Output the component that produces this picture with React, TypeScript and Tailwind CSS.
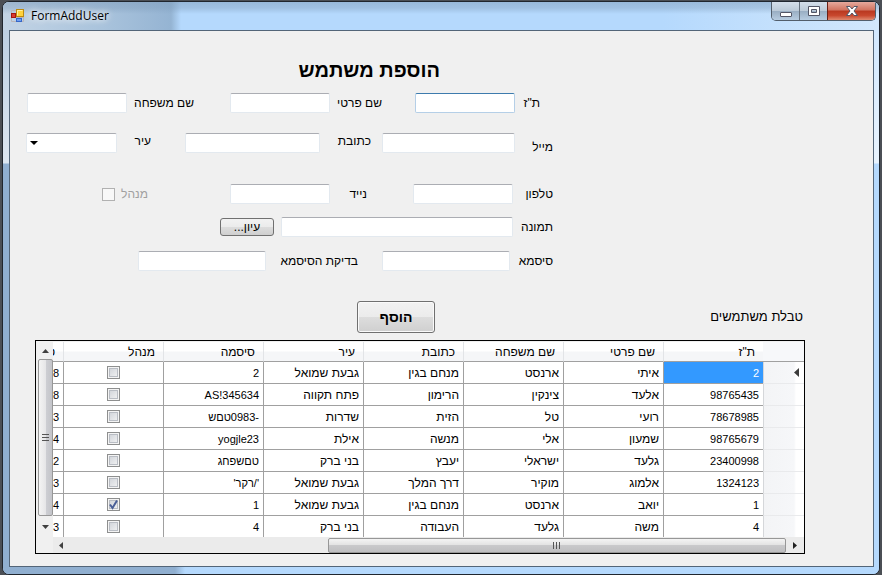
import React from "react";

const field =
  "h-5 shrink-0 appearance-none rounded-[2px] border border-[#e3e9ef] border-t-[#abadb3] bg-white px-1 text-xs outline-none";

type FieldProps = {
  id: string;
  label: string;
  labelClass: string;
  inputClass: string;
  type?: string;
};

function Field({ id, label, labelClass, inputClass, type = "text" }: FieldProps) {
  return (
    <>
      <label htmlFor={id} className={`shrink-0 whitespace-nowrap leading-4 ${labelClass}`}>
        {label}
      </label>
      <input id={id} type={type} className={`${field} ${inputClass}`} />
    </>
  );
}

const headers = ["ת\"ז", "שם פרטי", "שם משפחה", "כתובת", "עיר", "סיסמה", "מנהל", "טלפון"];

type User = {
  id: string;
  first: string;
  last: string;
  street: string;
  city: string;
  password: string;
  admin: boolean;
  phone: string;
};

const users: User[] = [
  { id: "2", first: "איתי", last: "ארנסט", street: "מנחם בגין", city: "גבעת שמואל", password: "2", admin: false, phone: "8" },
  { id: "98765435", first: "אלעד", last: "צינקין", street: "הרימון", city: "פתח תקווה", password: "AS!345634", admin: false, phone: "8" },
  { id: "78678985", first: "רועי", last: "טל", street: "הזית", city: "שדרות", password: "-0983טםש", admin: false, phone: "3" },
  { id: "98765679", first: "שמעון", last: "אלי", street: "מנשה", city: "אילת", password: "yogjle23", admin: false, phone: "4" },
  { id: "23400998", first: "גלעד", last: "ישראלי", street: "יעבץ", city: "בני ברק", password: "טםשפחג", admin: false, phone: "2" },
  { id: "1324123", first: "אלמוג", last: "מוקיר", street: "דרך המלך", city: "גבעת שמואל", password: "'/רקר'", admin: false, phone: "3" },
  { id: "1", first: "יואב", last: "ארנסט", street: "מנחם בגין", city: "גבעת שמואל", password: "1", admin: true, phone: "4" },
  { id: "4", first: "משה", last: "גלעד", street: "העבודה", city: "בני ברק", password: "4", admin: false, phone: "3" },
];

function AppIcon() {
  return (
    <svg width="14" height="14" viewBox="0 0 14 14" aria-hidden="true">
      <path d="M.5 1.5h12v11H.5zM5.500 1.500v11M.5 8.500h12" fill="none" stroke="#b9b5b8" />
      <rect x="0.500" y="4.500" width="4" height="4" fill="#d93a30" stroke="#a3150f" />
      <rect x="5.500" y="0.500" width="7" height="7" fill="#ffd23c" stroke="#bd8a10" />
      <path d="M6.500 6.500v-5h5" fill="none" stroke="#fff0a0" />
      <rect x="5.500" y="9.500" width="5" height="3" fill="#6f9df0" stroke="#3567c8" />
    </svg>
  );
}

function TitleBar() {
  return (
    <header className="flex h-7 shrink-0 items-start bg-[linear-gradient(to_bottom,#7f9dbb88_0px,#7f9dbb66_6px,transparent_12px),linear-gradient(to_right,#c3d4e5_0px,#a9c3dc_100px,#95b4d3_168px,#b5d9fd_178px,#b5d9fd_660px,#d2e7fc_100%)]">
      <div className="flex h-7 items-center gap-[6px] pl-2">
        <AppIcon />
        <h1 className="font-['Open_Sans','Noto_Sans',sans-serif] text-xs leading-4 [text-shadow:0_0_6px_#fff,0_0_8px_#fff]">
          FormAddUser
        </h1>
      </div>
      <div className="me-[3px] ms-auto flex h-[19px] overflow-hidden rounded-b-[5px] border border-t-0 border-[#525e6b]">
        <button type="button" aria-label="Minimize" className="flex w-7 items-center justify-center border-r border-[#66727f] bg-[linear-gradient(to_bottom,#d4dfea,#bccad8_48%,#98adc2_50%,#b7cce0)]">
          <svg width="12" height="16" viewBox="0 0 12 16"><rect x="0.500" y="9.500" width="11" height="4" rx="0.500" fill="#fff" stroke="#535666" /></svg>
        </button>
        <button type="button" aria-label="Maximize" className="flex w-[27px] items-center justify-center bg-[linear-gradient(to_bottom,#d4dfea,#bccad8_48%,#98adc2_50%,#b7cce0)]">
          <svg width="12" height="16" viewBox="0 0 12 16"><path fillRule="evenodd" d="M.5 3.500h11v9H.5zM3.500 6.500v3h5v-3z" fill="#fff" stroke="#535666" /></svg>
        </button>
        <button type="button" aria-label="Close" className="flex w-[48px] items-center justify-center border-l border-[#6b2015] bg-[linear-gradient(to_bottom,#e5a99d,#d0735f_45%,#b93820_50%,#c8482e_75%,#df8a70)]">
          <svg width="12" height="16" viewBox="0 0 12 16"><path d="M.5 3.500h3.500l2 2.500 2-2.500h3.500l-3.500 4.500 3.500 4.500H8L6 10l-2 2.500H.5L4 8z" fill="#fff" stroke="#535666" /></svg>
        </button>
      </div>
    </header>
  );
}

function UserForm() {
  return (
    <form className="w-[543px] text-xs" onSubmit={(e) => e.preventDefault()}>
      <h2 className="mr-[113px] pt-[23px] text-xl font-bold leading-8">הוספת משתמש</h2>
      <div className="mt-[7px] flex items-center pr-[13px]">
        <Field id="tz" label={'ת"ז'} labelClass="w-[25px]" inputClass="w-[100px] border-[#b5cfe7]! border-t-[#3d7bad]!" />
        <Field id="first" label="שם פרטי" labelClass="ms-[33px] w-[52px]" inputClass="w-[100px]" />
        <Field id="last" label="שם משפחה" labelClass="ms-9 w-[67px]" inputClass="w-[100px]" />
      </div>
      <div className="mt-5 flex h-[22px] items-start">
        <Field id="mail" label="מייל" labelClass="w-[38px] self-end" inputClass="w-[133px]" />
        <Field id="street" label="כתובת" labelClass="ms-[11px] w-[51px]" inputClass="w-[135px]" />
        <label htmlFor="city" className="ms-[34px] w-[34px] shrink-0 leading-4">עיר</label>
        <div className="grid w-[91px] shrink-0 items-center">
          <select id="city" className={`${field} col-start-1 row-start-1 w-full`}>
            <option></option>
          </select>
          <svg className="pointer-events-none col-start-1 row-start-1 me-1 justify-self-end" width="8" height="4" viewBox="0 0 8 4" aria-hidden="true">
            <path d="M0 0h8L4 4z" fill="#000" />
          </svg>
        </div>
      </div>
      <div className="mt-[29px] flex items-center">
        <Field id="phone" label="טלפון" labelClass="w-10" inputClass="w-[100px]" />
        <Field id="mobile" label="נייד" labelClass="ms-[46px] w-[37px]" inputClass="w-[100px]" />
        <label className="ms-[82px] flex items-center gap-[6px] leading-4 text-[#a0a0a0]">
          מנהל
          <input type="checkbox" disabled className="size-[13px] appearance-none border border-[#b1b1b1] bg-[#f8f8f8]" />
        </label>
      </div>
      <div className="mt-[13px] flex items-center">
        <Field id="picture" label="תמונה" labelClass="w-10" inputClass="w-[232px]" />
        <button type="button" className="ms-[7px] h-[18px] w-[54px] rounded-[3px] border border-[#707070] bg-[linear-gradient(to_bottom,#f2f2f2,#ebebeb_50%,#dddddd_50%,#cfcfcf)] leading-4">
          עיון...
        </button>
      </div>
      <div className="mt-[14px] flex items-center">
        <Field id="pass" type="password" label="סיסמא" labelClass="w-[43px]" inputClass="w-[128px]" />
        <Field id="pass2" type="password" label="בדיקת הסיסמא" labelClass="ms-6 w-[92px]" inputClass="w-[128px]" />
      </div>
      <button type="submit" className="mr-[118px] mt-[30px] block h-8 w-[78px] rounded-[3px] border border-[#707070] bg-[linear-gradient(to_bottom,#f2f2f2,#ebebeb_50%,#dddddd_50%,#cfcfcf)] text-sm font-bold shadow-[inset_0_0_0_1px_#fafafa]">
        הוסף
      </button>
    </form>
  );
}

function GridCheck({ checked, label }: { checked: boolean; label: string }) {
  return (
    <span className="mx-auto grid size-[13px]">
      <input
        type="checkbox"
        aria-label={label}
        defaultChecked={checked}
        className="col-start-1 row-start-1 size-[13px] appearance-none border border-[#8e8f8f] bg-[linear-gradient(135deg,#cbcfd5,#f6f6f6)] shadow-[inset_0_0_0_1px_#f4f4f4,inset_0_0_0_2px_#b9bdc4]"
      />
      {checked && (
        <svg className="pointer-events-none col-start-1 row-start-1" width="13" height="13" viewBox="0 0 13 13" aria-hidden="true">
          <path d="M3 6.500l2.500 3.500L10 2.500" fill="none" stroke="#4a5f97" strokeWidth="2" />
        </svg>
      )}
    </span>
  );
}

function UsersTable() {
  const cell = "truncate border-b border-l border-[#a0a0a0] px-1 py-0";
  const latin = `${cell} text-[11px]`;
  return (
    <section className="ml-[25px] mr-[68px] border border-black bg-[#f0f0f0] pt-px">
      <div className="flex h-[195px]" dir="rtl">
        <div className="min-w-0 grow overflow-hidden bg-white">
          <table className="w-[841px] table-fixed border-separate border-spacing-0 text-xs leading-4">
            <thead>
              <tr className="h-5 bg-[linear-gradient(to_bottom,#fff_45%,#f5f6f8_50%,#f5f6f8)]">
                <th className="w-[41px] border-b border-[#a0a0a0] bg-[#f7f8fa] p-0" aria-label="row"></th>
                {headers.map((h) => (
                  <th key={h} className="w-[100px] border-b border-l border-b-[#a0a0a0] border-l-[#e2e4e7] px-2 py-0 text-start font-normal">
                    {h}
                  </th>
                ))}
              </tr>
            </thead>
            <tbody>
              {users.map((u, i) => (
                <tr key={u.id} className="h-[22px]">
                  <th className="border-b border-l border-b-[#e9eaec] border-l-[#d5d7da] bg-[linear-gradient(to_left,#fff_8px,#f6f7f9_10px,#f3f4f6)] p-0">
                    {i === 0 && (
                      <svg className="ms-[5px]" width="5" height="9" viewBox="0 0 5 9" aria-label="current row">
                        <path d="M5 0v9L0 4.500z" fill="#3c3c3c" />
                      </svg>
                    )}
                  </th>
                  <td className={i === 0 ? `${latin} bg-[#3399ff] text-white` : latin}>{u.id}</td>
                  <td className={cell}>{u.first}</td>
                  <td className={cell}>{u.last}</td>
                  <td className={cell}>{u.street}</td>
                  <td className={cell}>{u.city}</td>
                  <td className={latin}>{u.password}</td>
                  <td className={cell}><GridCheck checked={u.admin} label={`מנהל ${u.first}`} /></td>
                  <td className={latin}>{u.phone}</td>
                </tr>
              ))}
            </tbody>
          </table>
        </div>
        <div className="flex w-[17px] shrink-0 flex-col items-start bg-[#f0f0f0]">
          <div className="flex h-[17px] w-[15px] items-center justify-center">
            <svg width="7" height="4" viewBox="0 0 7 4" aria-hidden="true"><path d="M0 4h7L3.500 0z" fill="#404040" /></svg>
          </div>
          <div className="flex w-[15px] grow items-center justify-center rounded-[2px] border border-[#979797] bg-[linear-gradient(to_right,#f4f4f4,#e6e6e8_50%,#cdced3_55%,#c3c4c9)]">
            <svg width="7" height="8" viewBox="0 0 7 8" aria-hidden="true"><path d="M0 .5h7M0 3.500h7M0 6.500h7" stroke="#555" /></svg>
          </div>
          <div className="flex h-[21px] w-[15px] items-center justify-center">
            <svg width="7" height="4" viewBox="0 0 7 4" aria-hidden="true"><path d="M0 0h7L3.500 4z" fill="#404040" /></svg>
          </div>
        </div>
      </div>
      <div className="ml-[17px] flex h-4 items-center bg-[#ebebeb]" dir="ltr">
        <div className="flex w-4 shrink-0 justify-center">
          <svg width="4" height="7" viewBox="0 0 4 7" aria-hidden="true"><path d="M4 0v7L0 3.500z" fill="#404040" /></svg>
        </div>
        <div className="ml-auto flex h-[15px] w-[61%] items-center justify-center rounded-[2px] border border-[#979797] bg-[linear-gradient(to_bottom,#f4f4f4,#e3e3e3_45%,#c9c9cb_50%,#bebec0)]">
          <svg width="8" height="7" viewBox="0 0 8 7" aria-hidden="true"><path d="M.5 0v7M3.500 0v7M6.500 0v7" stroke="#555" /></svg>
        </div>
        <div className="flex w-[18px] shrink-0 justify-center">
          <svg width="4" height="7" viewBox="0 0 4 7" aria-hidden="true"><path d="M0 0v7l4-3.500z" fill="#202020" /></svg>
        </div>
      </div>
    </section>
  );
}

export default function App() {
  return (
    <div className="flex min-h-screen flex-col bg-[#4b4f55] px-[2px] pt-px font-['Liberation_Sans',sans-serif] text-black">
      <div className="flex grow flex-col overflow-hidden rounded-[7px] border border-[#20262e] bg-[#b5d9fd]">
        <TitleBar />
        <div className="flex grow flex-col bg-[linear-gradient(to_bottom,#ffffff66_0px,#ffffffb0_133px,transparent_134px),linear-gradient(to_right,#90afd0_172px,#b5d9fd_182px)] pb-[7px] pl-[6px] pr-[5px]">
          <main className="grow border border-[#536578] bg-[#f0f0f0]">
            <div dir="rtl" className="flex flex-row-reverse items-end justify-between pr-[70px]">
              <UserForm />
              <h3 className="mb-[6px] text-[13px] leading-5">טבלת משתמשים</h3>
            </div>
            <div className="mt-[7px]">
              <UsersTable />
            </div>
          </main>
        </div>
      </div>
    </div>
  );
}
